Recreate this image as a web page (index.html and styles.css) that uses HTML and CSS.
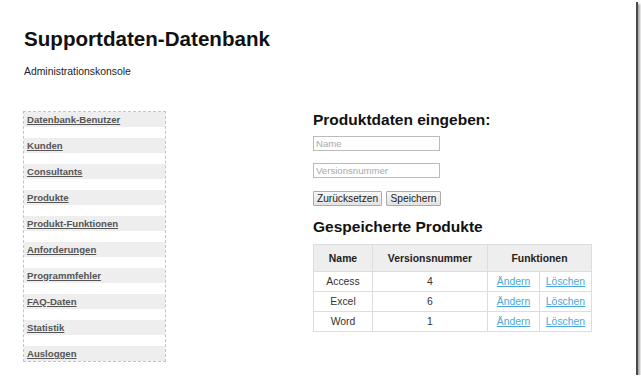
FILE: index.html
```html
<!DOCTYPE html>
<html lang="de">
  <head>
    <meta charset="UTF-8" />
    <meta name="viewport" content="width=device-width, initial-scale=1.0" />
    <title>Supportdaten-Datenbank</title>
    <link rel="stylesheet" href="styles.css">
  </head>
  <body>
    <div class="frame">
      <h1>Supportdaten-Datenbank</h1>
      <p class="subtitle">Administrationskonsole</p>

      <div class="main">
        <ul class="sidebar">
          <li><a href="#">Datenbank-Benutzer</a></li>
          <li><a href="#">Kunden</a></li>
          <li><a href="#">Consultants</a></li>
          <li><a href="#">Produkte</a></li>
          <li><a href="#">Produkt-Funktionen</a></li>
          <li><a href="#">Anforderungen</a></li>
          <li><a href="#">Programmfehler</a></li>
          <li><a href="#">FAQ-Daten</a></li>
          <li><a href="#">Statistik</a></li>
          <li><a href="#">Ausloggen</a></li>
        </ul>

        <div class="content">
          <h2>Produktdaten eingeben:</h2>
          <div class="form">
            <input type="text" id="productName" placeholder="Name" />
            <input type="text" id="productVersion" placeholder="Versionsnummer" />
            <div class="buttons">
              <button id="resetButton" class="btn-reset">Zurücksetzen</button>
              <button id="saveButton" class="btn-save">Speichern</button>
            </div>
          </div>

          <h2 class="table-title">Gespeicherte Produkte</h2>
          <table class="products">
            <thead>
              <tr>
                <th class="col-name">Name</th>
                <th class="col-version">Versionsnummer</th>
                <th colspan="2">Funktionen</th>
              </tr>
            </thead>
            <tbody>
              <tr>
                <td>Access</td>
                <td>4</td>
                <td class="col-edit"><a href="#">Ändern</a></td>
                <td><a href="#">Löschen</a></td>
              </tr>
              <tr>
                <td>Excel</td>
                <td>6</td>
                <td class="col-edit"><a href="#">Ändern</a></td>
                <td><a href="#">Löschen</a></td>
              </tr>
              <tr>
                <td>Word</td>
                <td>1</td>
                <td class="col-edit"><a href="#">Ändern</a></td>
                <td><a href="#">Löschen</a></td>
              </tr>
            </tbody>
          </table>
        </div>
      </div>
    </div>
  </body>
</html>
```

FILE: styles.css
```css
body {
  margin: 0;
  background-color: #fff;
  font-family: "Liberation Sans", Arial, sans-serif;
  font-size: 10.4px;
  color: #222;
}

.frame {
  width: 636px;
  height: 375px;
  box-sizing: border-box;
  padding: 27px 0 0 23px;
  background: white;
  box-shadow: 2px 2px 0 #4a4a4a, 4px 4px 2px rgba(0, 0, 0, 0.35);
}

h1 {
  margin: 0 0 0 1px;
  font-size: 20.6px;
  line-height: 24px;
  color: #111;
}

.subtitle {
  margin: 14px 0 0 1px;
  line-height: 13px;
}

.main {
  display: flex;
  align-items: flex-start;
  margin-top: 33px;
}

.sidebar {
  list-style: none;
  width: 141px;
  margin: 0;
  padding: 0;
  border: 1px dashed #c4c4c4;
}

.sidebar li {
  height: 15px;
  margin-bottom: 11px;
  padding-left: 3px;
  background-color: #eee;
  line-height: 15px;
}

.sidebar li:last-child {
  margin-bottom: 0;
}

.sidebar a {
  font-size: 9.6px;
  font-weight: bold;
  color: #555;
}

.content {
  margin-left: 147px;
}

h2 {
  margin: 0;
  font-size: 15.5px;
  line-height: 18px;
  color: #111;
}

.form {
  margin-top: 7px;
}

.form input[type="text"] {
  display: block;
  width: 127px;
  height: 15px;
  box-sizing: border-box;
  margin: 0 0 12px;
  padding: 0 2px;
  border: 1px solid #bbb;
  font-family: inherit;
  font-size: 9.6px;
  color: #333;
}

.form input::placeholder {
  color: #aaa;
}

.buttons {
  display: flex;
  gap: 4px;
  margin-top: 13px;
}

button {
  height: 15px;
  box-sizing: border-box;
  padding: 0;
  border: 1px solid #ababab;
  border-radius: 1px;
  background: linear-gradient(#f7f7f7, #e2e2e2);
  font-family: inherit;
  font-size: 10.2px;
  line-height: 13px;
  color: #222;
  cursor: pointer;
}

.btn-reset {
  width: 69px;
}

.btn-save {
  width: 55px;
}

.table-title {
  margin-top: 12px;
}

.products {
  margin-top: 8px;
  border-collapse: collapse;
  table-layout: fixed;
  width: 279px;
}

.products th,
.products td {
  border: 1px solid #ddd;
  padding: 0;
  text-align: center;
  color: #333;
}

.products th {
  height: 26px;
  background-color: #eee;
  font-weight: bold;
  color: #222;
}

.products td {
  height: 19px;
}

.col-name {
  width: 58px;
}

.col-version {
  width: 114px;
}

.col-edit {
  width: 49px;
}

.products a {
  color: #4aa8d6;
}
```
